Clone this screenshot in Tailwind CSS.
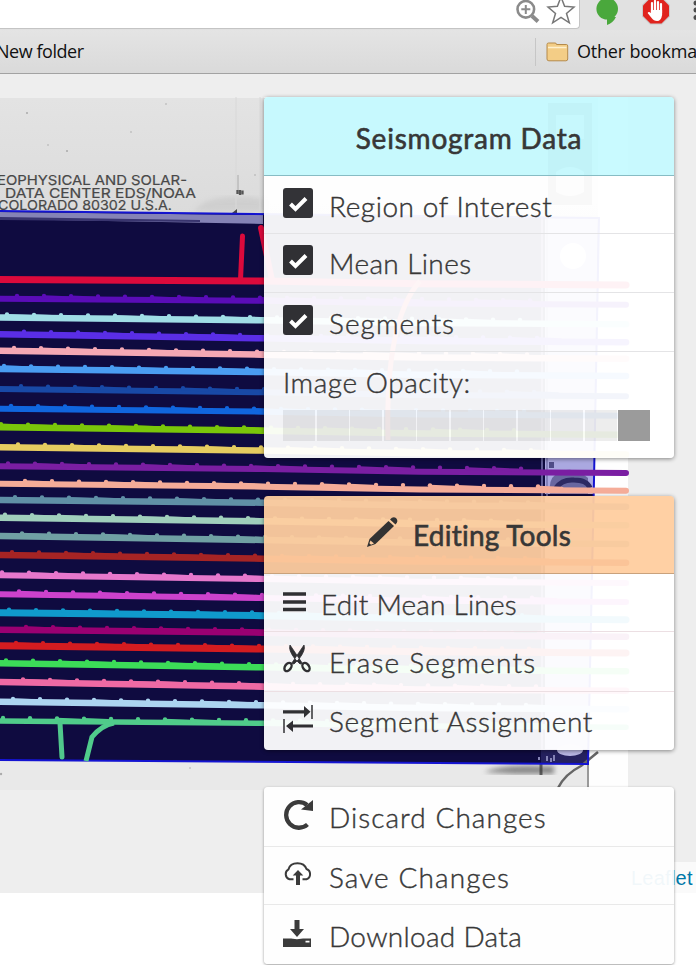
<!DOCTYPE html>
<html lang="en">
<head>
<meta charset="utf-8">
<title>Seismogram Editor</title>
<script src="https://cdn.jsdelivr.net/npm/@tailwindcss/browser@4"></script>
</head>
<body class="bg-white">
<div class="w-[696px] h-[965px] overflow-hidden flex flex-col bg-white">
  <header class="h-[74px] shrink-0 flex flex-col bg-[#e1e1e1] border-b border-[#a2a2a2] text-[#111]">
    <div class="h-[30px] flex">
      <div class="w-[580px] h-[29px] shrink-0 bg-white border-b border-r border-[#c4c4c4] rounded-br-[4px] flex justify-end items-start">
        <svg class="w-[66px] h-[28px]" viewBox="513 0 66 28" fill="none">
          <circle cx="525.8" cy="9.3" r="8.3" stroke="#8b8b8b" stroke-width="2.6"/>
          <path d="M525.8 5v9M521.3 9.3h9" stroke="#8b8b8b" stroke-width="2"/>
          <path d="M532 16l6 5.5" stroke="#8b8b8b" stroke-width="4"/>
          <path d="M561 -3l3.600 9.200 9.400 .9-7.500 6.400 2.800 9.300-8.300-5.500-8.300 5.500 2.800-9.300-7.500-6.400 9.400-.9z" stroke="#777" stroke-width="1.500"/>
        </svg>
      </div>
      <svg class="w-[116px] h-[30px] shrink-0" viewBox="580 0 116 30">
        <circle cx="607.2" cy="8.8" r="10.8" fill="#4aa83c"/>
        <path d="M607 17h9q-3 6-9 8z" fill="#4aa83c"/>
        <path d="M650-3h12l8 8v11.500l-8 8h-12l-8-8V5z" fill="#c9c9c9"/>
        <path d="M650.500-2h11l7.500 7.500v10.500l-7.500 7.500h-11l-7.500-7.500V5.500z" fill="#e0241e"/>
        <path d="M652 12V3M655 11V1M658 11V2M661 13V4" stroke="#fff" stroke-width="2.200" stroke-linecap="round"/>
        <path d="M650.900 10h11.200v5q-1 6-5 6-3.500 0-5.500-3l-4-5q1-2 3.300 0z" fill="#fff"/>
        <circle cx="696" cy="3" r="2.500" fill="#4c4c4c"/><circle cx="696" cy="10" r="2.500" fill="#4c4c4c"/><circle cx="696" cy="17.500" r="2.500" fill="#4c4c4c"/>
      </svg>
    </div>
    <div class="h-[43px] flex items-center bg-linear-to-b from-[#e4e4e4] to-[#dadada] font-['Open_Sans',sans-serif] text-[18px] whitespace-nowrap">
      <div class="w-[536px] h-[28px] shrink-0 flex items-center border-r border-[#c6c6c6]"><span class="-ml-[4px] tracking-[-0.45px]">New folder</span></div>
      <svg class="w-[24px] h-[22px] ml-[9px] shrink-0" viewBox="545 41 24 22">
        <path d="M547 44.500q0-1.500 1.500-1.500h6.500q1.500 0 1.500 1.500h10q1.200 0 1.200 1.500v13q0 1.800-1.800 1.800h-17q-1.900 0-1.900-1.800z" fill="#f3cd86" stroke="#b58a4a"/>
        <path d="M548 47.500h18.500" stroke="#fff0cd" stroke-width="1.500"/>
      </svg>
      <span class="ml-[8px] tracking-[-0.2px]">Other bookmarks</span>
    </div>
  </header>

  <main class="relative h-[891px] font-['Lato',sans-serif] text-[#373737]">
    <svg class="absolute left-0 top-0 w-[696px] h-[891px]" viewBox="0 74 696 891">
      <defs>
        <linearGradient id="paper" x1="0" y1="0" x2="0" y2="1"><stop offset="0" stop-color="#e3e3e3"/><stop offset="1" stop-color="#dbdbdb"/></linearGradient>
        <filter id="soft"><feGaussianBlur stdDeviation="2.500"/></filter>
      </defs>
      <rect x="0" y="74" width="696" height="819" fill="#eeeeee"/>
      <rect x="264" y="97" width="364" height="693" fill="#fefefe"/>
      <rect x="0" y="98" width="598" height="120" fill="url(#paper)"/>
      <path d="M0 759L588 763V790H0z" fill="#e9e9e9"/>
      <path d="M205 202q25-9 58-3v12h-70z" fill="#c2c2c2" opacity=".5" filter="url(#soft)"/>
      <path d="M236 97v115M260 97v118" stroke="#d8d8d8"/>
      <g fill="#aaa"><circle cx="27" cy="113" r="1"/><circle cx="67" cy="151" r="1"/><circle cx="48" cy="145" r=".8"/><circle cx="131" cy="132" r=".8"/><circle cx="166" cy="104" r=".8"/><circle cx="255" cy="175" r=".8"/><circle cx="1" cy="774" r="1.200"/><circle cx="190" cy="768" r=".8"/></g>
      <g font-family="Inter, sans-serif" font-size="13.500" fill="#484848" stroke="#484848" stroke-width=".2">
        <text x="-3" y="184.500" textLength="190" lengthAdjust="spacingAndGlyphs">EOPHYSICAL AND SOLAR-</text>
        <text x="5" y="197.500" textLength="191" lengthAdjust="spacingAndGlyphs">DATA CENTER EDS/NOAA</text>
        <text x="-2" y="210" textLength="174" lengthAdjust="spacingAndGlyphs">COLORADO 80302 U.S.A.</text>
      </g>
      <path d="M237.500 190v4M240 190v5M242.500 190.500v4" stroke="#555" stroke-width="2.300"/>
      <path d="M238 175v15" stroke="#aaa"/>
      <path d="M232 213l5-4v4z" fill="#444"/>
      <path d="M548 103h44v102h-44z" fill="#777"/>
      <path d="M556 115h28v24h-28zM556 172q14-10 28 0v20q-14 8-28 0z" fill="#d4d4d4"/>
      <path d="M0 211L599 218L588 764L0 760z" fill="#0f0b40"/>
      <path d="M0 212L263 215V224L0 219z" fill="#8583b6"/>
      <path d="M0 217L200 220V222L0 220z" fill="#39356f"/>
      <path d="M545 218H598L594 494H545z" fill="#aaa8e0"/>
      <path d="M542 218V764M547 218V764" stroke="#7876ae" stroke-width="1.500"/>
      <path d="M550 494q-2-14 6-20q16-10 32 4v16z" fill="#6967a0"/>
      <path d="M556 488q6-9 18-8q13 0 16 8" fill="none" stroke="#2d2a63" stroke-width="5"/>
      <path d="M549 462h5v6h-5z" fill="#504d88"/>
      <circle cx="573" cy="256" r="13" fill="#fff"/>
      <path d="M545 496H593L588 763H545z" fill="#b5b4e4"/>
      <path d="M541 749H588V764H541z" fill="#25215f"/>
      <ellipse cx="570" cy="750" rx="13" ry="6" fill="#b9b7e4"/>
      <path d="M539 757v3M547 756v5M551 758v4M554 755v6" stroke="#8583b6" stroke-width="2"/>
      <path d="M484 772q20-8 58-6h12v8h-40z" fill="#555" opacity=".65" filter="url(#soft)"/>
      <path d="M541 763v12" stroke="#333" stroke-width="3" opacity=".7"/>
      <path d="M598 752L581 766Q565 774 558 788" fill="none" stroke="#666" stroke-width="2.500"/>
      <path d="M588 764v26" stroke="#999" stroke-width="2"/>
      <path d="M0 211L599 218L594 480L588 764L0 760" fill="none" stroke="#1414d2" stroke-width="2"/>
      <g id="traces" stroke-linecap="round"></g>
      <path d="M242.500 236L240.500 280" stroke="#dc0a3c" stroke-width="5" stroke-linecap="round"/>
      <path d="M261 228L272 280" stroke="#dc0a3c" stroke-width="6" stroke-linecap="round"/>
      <path d="M420 281Q385 320 388 440" stroke="#dc3c50" stroke-width="5" fill="none"/>
      <path d="M60 723L62 757" stroke="#50c88c" stroke-width="5" stroke-linecap="round"/>
      <path d="M86 761L92 737Q102 725 114 723" stroke="#50cc8c" stroke-width="5" fill="none"/>
    </svg>

    <div class="absolute left-[624px] top-[788px] w-[72px] h-[31px] bg-white/70 pl-[7px] pt-[4px] font-['Liberation_Sans',sans-serif] text-[20px] leading-[24px] tracking-[0.25px] text-[#0078a8]">Leaflet</div>

    <div class="relative ml-[264px] w-[410px] pt-[23px] flex flex-col gap-[38px] text-[28px] leading-[34px] whitespace-nowrap font-light [-webkit-text-stroke:0.4px_#373737]">
      <section class="h-[361px] rounded-[4px] overflow-hidden shadow-[0_1px_4px_rgba(0,0,0,0.45)] flex flex-col">
        <h2 class="h-[79px] bg-[#c6faff]/95 border-b border-[#87bcc4] flex justify-center items-center font-normal [-webkit-text-stroke:0.6px_#373737] text-[28px] pt-[4px]"><span class="tracking-[0.78px]">Seismogram Data</span></h2>
        <div class="h-[58px] bg-white/95 border-b border-[#e4e4e6] flex items-start pl-[19px]">
          <svg class="w-[30px] h-[30px] mt-[12px]" viewBox="0 0 30 30"><rect width="30" height="30" rx="3" fill="#333337"/><path d="M7.500 16l5 5L23 10.500" fill="none" stroke="#fff" stroke-width="4"/></svg>
          <span class="ml-[16px] mt-[13px] tracking-[0.55px]">Region of Interest</span>
        </div>
        <div class="h-[59px] bg-white/95 border-b border-[#e4e4e6] flex items-start pl-[19px]">
          <svg class="w-[30px] h-[30px] mt-[11px]" viewBox="0 0 30 30"><rect width="30" height="30" rx="3" fill="#303034"/><path d="M7.500 16l5 5L23 10.500" fill="none" stroke="#fff" stroke-width="4"/></svg>
          <span class="ml-[16px] mt-[12px] tracking-[0.4px]">Mean Lines</span>
        </div>
        <div class="h-[59px] bg-white/95 border-b border-[#e4e4e6] flex items-start pl-[19px]">
          <svg class="w-[30px] h-[30px] mt-[12px]" viewBox="0 0 30 30"><rect width="30" height="30" rx="3" fill="#303034"/><path d="M7.500 16l5 5L23 10.500" fill="none" stroke="#fff" stroke-width="4"/></svg>
          <span class="ml-[16px] mt-[13px] tracking-[1.05px]">Segments</span>
        </div>
        <div class="flex-1 bg-white/95 pl-[19px] pt-[13px] pr-[24px]">
          <div class="tracking-[0.55px]">Image Opacity:</div>
          <div class="mt-[11px] h-[31px] flex gap-[1.500px]">
            <i class="flex-1 bg-black/7"></i><i class="flex-1 bg-black/7"></i><i class="flex-1 bg-black/7"></i><i class="flex-1 bg-black/7"></i><i class="flex-1 bg-black/7"></i><i class="flex-1 bg-black/7"></i><i class="flex-1 bg-black/7"></i><i class="flex-1 bg-black/7"></i><i class="flex-1 bg-black/7"></i><i class="flex-1 bg-black/7"></i><i class="flex-1 bg-[#9b9b9b]"></i>
          </div>
        </div>
      </section>

      <section class="h-[254px] rounded-[4px] overflow-hidden shadow-[0_1px_4px_rgba(0,0,0,0.45)] flex flex-col">
        <h2 class="h-[78px] bg-[#ffcd9f]/95 border-b border-[#c9a27c] flex items-start pl-[102px] font-normal [-webkit-text-stroke:0.6px_#373737] text-[28px]">
          <svg class="w-[32px] h-[32px] mt-[20px]" viewBox="0 0 32 32"><path d="M1 31L3.500 23L22.500 5L28 10L9.500 28z" fill="#333"/><path d="M24 3.500Q27 0 30 2Q33 5 29.500 8.500z" fill="#333"/><path d="M4.500 24.500l3.500 3-3 1.200-1.600-1.400z" fill="#fccda0"/></svg>
          <span class="ml-[15px] mt-[22px] tracking-[0.25px]">Editing Tools</span>
        </h2>
        <div class="h-[58px] bg-white/95 border-b border-[#ecdfe3] flex items-start pl-[19px]">
          <svg class="w-[23px] h-[20px] mt-[18px]" viewBox="0 0 23 20"><path d="M0 2h23M0 10h23M0 17.500h23" stroke="#303033" stroke-width="3.300"/></svg>
          <span class="ml-[15px] mt-[13px] tracking-[0.2px]">Edit Mean Lines</span>
        </div>
        <div class="h-[60px] bg-white/95 border-b border-[#ecdfe3] flex items-start pl-[19px]">
          <svg class="w-[28px] h-[30px] mt-[12px]" viewBox="0 0 28 30" fill="none" stroke="#303033"><ellipse cx="5" cy="23" rx="3" ry="4.600" stroke-width="2.400" transform="rotate(35 5 23)"/><ellipse cx="23" cy="23" rx="3" ry="4.600" stroke-width="2.400" transform="rotate(-35 23 23)"/><path d="M7 1L19.500 19.500L17 20L12 15Q5 6 7 1zM21 1L8.500 19.500L11 20L16 15Q23 6 21 1z" fill="#303033" stroke-width=".8"/></svg>
          <span class="ml-[18px] mt-[13px] tracking-[1.2px]">Erase Segments</span>
        </div>
        <div class="flex-1 bg-white/95 flex items-start pl-[19px]">
          <svg class="w-[30px] h-[30px] mt-[12px]" viewBox="0 0 30 30"><path d="M0 6.200h21V2l6.500 5.800-6.500 5.900V9.500H0zM30 20.400H10v-4L3 22l7 6v-4.400h20z" fill="#303033"/><path d="M29 1v14M1 15v14" stroke="#303033" stroke-width="1.500"/></svg>
          <span class="ml-[16px] mt-[12px] tracking-[0.65px]">Segment Assignment</span>
        </div>
      </section>

      <section class="-mt-px h-[177px] rounded-[4px] overflow-hidden shadow-[0_1px_3px_rgba(0,0,0,0.4)] flex flex-col">
        <div class="h-[60px] bg-[#fefefe]/95 border-b border-[#e9e9e9] flex items-start pl-[19px]">
          <svg class="w-[30px] h-[31px] mt-[12px]" viewBox="0 0 30 31"><path d="M24.500 25.500A12.800 12.800 0 1 1 24 6" fill="none" stroke="#3b3b3b" stroke-width="4.300"/><path d="M18 10.500L30 1v11z" fill="#3b3b3b"/></svg>
          <span class="ml-[16px] mt-[13px] tracking-[1.05px]">Discard Changes</span>
        </div>
        <div class="h-[58px] bg-[#fefefe]/95 border-b border-[#e9e9e9] flex items-start pl-[19px]">
          <svg class="w-[30px] h-[23px] mt-[15px]" viewBox="0 0 30 23"><path d="M10.500 17.300H6.500A5.500 5.500 0 0 1 5.500 7.300Q7 1.200 14.500 1.200Q21.500 1.200 23.500 7A5.500 5.500 0 0 1 23.500 17.300H19.500" fill="none" stroke="#3b3b3b" stroke-width="2"/><path d="M13 23V13.500H9.700L15 8l5.300 5.500H17V23z" fill="#3b3b3b"/></svg>
          <span class="ml-[16px] mt-[13px] tracking-[1.1px]">Save Changes</span>
        </div>
        <div class="flex-1 bg-[#fefefe]/95 flex items-start pl-[19px]">
          <svg class="w-[28px] h-[27px] mt-[15px]" viewBox="0 0 28 27"><path d="M11.500 0h5v9H21l-7 8-7-8h4.500zM0 18.500h8l6 .8 6-.8h8V27H0z" fill="#3b3b3b"/><path d="M22.500 20.800h4v1.700h-4z" fill="#fff"/></svg>
          <span class="ml-[18px] mt-[14px] tracking-[0.3px]">Download Data</span>
        </div>
      </section>
    </div>
  </main>
</div>
<script>
  // Each trace: y at the left edge, y at x=263, colour, thickness.
  const traces = [
    [279.5, 281, '#dc0a3c', 7], [298.7, 300.7, '#5a0cb8', 6], [317.5, 320.3, '#a0dde6', 6.5],
    [334.3, 338.3, '#5a2ee6', 6.5], [350.7, 354.7, '#f5a8b4', 6.5], [369, 372, '#4a9df2', 6.5],
    [389, 392.3, '#1849a6', 6], [408.7, 411.7, '#1066de', 6], [427.3, 430.7, '#7ac60a', 6.5],
    [447.3, 450.5, '#e6cc60', 6.5], [466.3, 469, '#7a1ea2', 6], [483.7, 486.7, '#f5ac98', 6],
    [500, 502.7, '#6090a6', 6.5], [517.7, 521.3, '#a0cfbc', 6.5], [536, 540, '#70a0a4', 6.5],
    [555, 558.7, '#a62424', 6.5], [575.3, 579, '#e678cc', 6], [594.3, 598, '#cc42cc', 6],
    [612.7, 615.7, '#109acc', 7], [629.7, 632.7, '#9a0072', 6.5], [645.7, 649, '#d41c20', 7],
    [663.3, 667.3, '#3cdc58', 6.5], [682, 686.7, '#ee6aa4', 6.5], [701.7, 705.3, '#acd4f0', 6.5],
    [721, 723.3, '#50cc8a', 5.5]
  ];
  const g = document.getElementById('traces');
  const add = (tag, attrs) => {
    const el = document.createElementNS('http://www.w3.org/2000/svg', tag);
    for (const k in attrs) el.setAttribute(k, attrs[k]);
    g.appendChild(el);
  };
  traces.forEach(([a, b, color, w], i) => {
    const end = b + 4;
    add('polyline', { points: `-3,${a} 263,${b} 420,${b + 2.7} 626,${end}`, fill: 'none', stroke: color, 'stroke-width': w });
    if (i === 0) return;
    for (let x = (i * 17) % 27; x < 540; x += 27) {
      const y = x < 263 ? a + (b - a) * x / 263 : b + 3 * (x - 263) / 300;
      add('circle', { cx: x, cy: y - 3, r: 2.2, fill: color });
      if ((x + i * 5) % 4 < 2) add('path', { d: `M${x} ${y - 2.2}l24 1`, stroke: color, 'stroke-width': 3 });
    }
  });
</script>
</body>
</html>
